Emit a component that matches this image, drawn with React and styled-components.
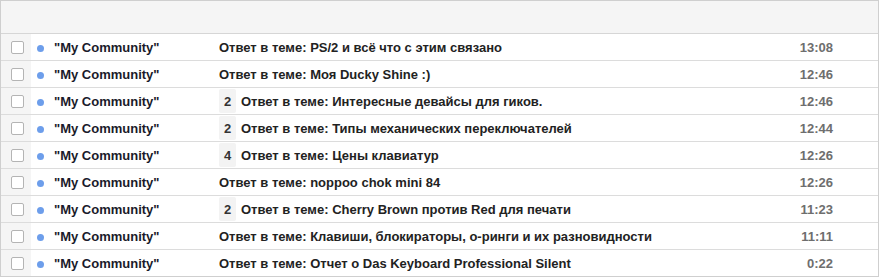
import styled, { createGlobalStyle } from 'styled-components';

const GlobalStyle = createGlobalStyle`
  html, body {
    margin: 0;
    padding: 0;
    background: #ffffff;
  }
  body {
    font-family: "Liberation Sans", Arial, sans-serif;
  }
`;

const messages = [
  { subject: 'PS/2 и всё что с этим связано', time: '13:08' },
  { subject: 'Моя Ducky Shine :)', time: '12:46' },
  { subject: 'Интересные девайсы для гиков.', time: '12:46', count: 2 },
  { subject: 'Типы механических переключателей', time: '12:44', count: 2 },
  { subject: 'Цены клавиатур', time: '12:26', count: 4 },
  { subject: 'noppoo chok mini 84', time: '12:26' },
  { subject: 'Cherry Brown против Red для печати', time: '11:23', count: 2 },
  { subject: 'Клавиши, блокираторы, о-ринги и их разновидности', time: '11:11' },
  { subject: 'Отчет о Das Keyboard Professional Silent', time: '0:22' },
];

function App() {
  return (
    <>
      <GlobalStyle />
      <Frame>
        <Toolbar />
        {messages.map((msg, i) => (
          <Row key={i} $last={i === messages.length - 1}>
            <CheckCell>
              <Checkbox />
            </CheckCell>
            <DotCell>
              <UnreadDot />
            </DotCell>
            <Sender>"My Community"</Sender>
            <Subject>
              {msg.count && <Count>{msg.count}</Count>}
              <SubjectText>Ответ в теме: {msg.subject}</SubjectText>
            </Subject>
            <Time>{msg.time}</Time>
          </Row>
        ))}
      </Frame>
    </>
  );
}

export default App;

const Frame = styled.div`
  width: 879px;
  height: 277px;
  box-sizing: border-box;
  border: 1px solid #cfcfcf;
  background: #ffffff;
  overflow: hidden;
`;

const Toolbar = styled.div`
  height: 32px;
  background: #f5f5f5;
  border-bottom: 1px solid #d6d6d6;
`;

const Row = styled.div`
  display: grid;
  grid-template-columns: 30px 23px 165px 1fr 80px;
  align-items: center;
  height: 26px;
  border-bottom: ${({ $last }) => ($last ? 'none' : '1px solid #dcdcdc')};
  font-size: 13px;
  font-weight: bold;
  color: #222222;
`;

const CheckCell = styled.div`
  height: 100%;
  background: #f5f5f5;
  display: flex;
  align-items: center;
  padding-left: 10px;
`;

const Checkbox = styled.span`
  width: 11px;
  height: 11px;
  border: 1px solid #b4b4b4;
  border-radius: 2px;
  background: #ffffff;
  margin-top: 1px;
`;

const DotCell = styled.div`
  display: flex;
  align-items: center;
  padding-left: 6px;
`;

const UnreadDot = styled.span`
  width: 7px;
  height: 7px;
  border-radius: 50%;
  background: #6d9eeb;
  margin-top: 2px;
`;

const Sender = styled.div`
  white-space: nowrap;
  color: #1a1a2a;
`;

const Subject = styled.div`
  display: flex;
  align-items: center;
  white-space: nowrap;
  overflow: hidden;
`;

const Count = styled.span`
  display: inline-flex;
  align-items: center;
  justify-content: center;
  width: 17px;
  height: 24px;
  margin-right: 5px;
  background: #f3f3f3;
  border-radius: 2px;
  color: #333333;
`;

const SubjectText = styled.span``;

const Time = styled.div`
  text-align: right;
  padding-right: 45px;
  color: #6e6e6e;
`;
